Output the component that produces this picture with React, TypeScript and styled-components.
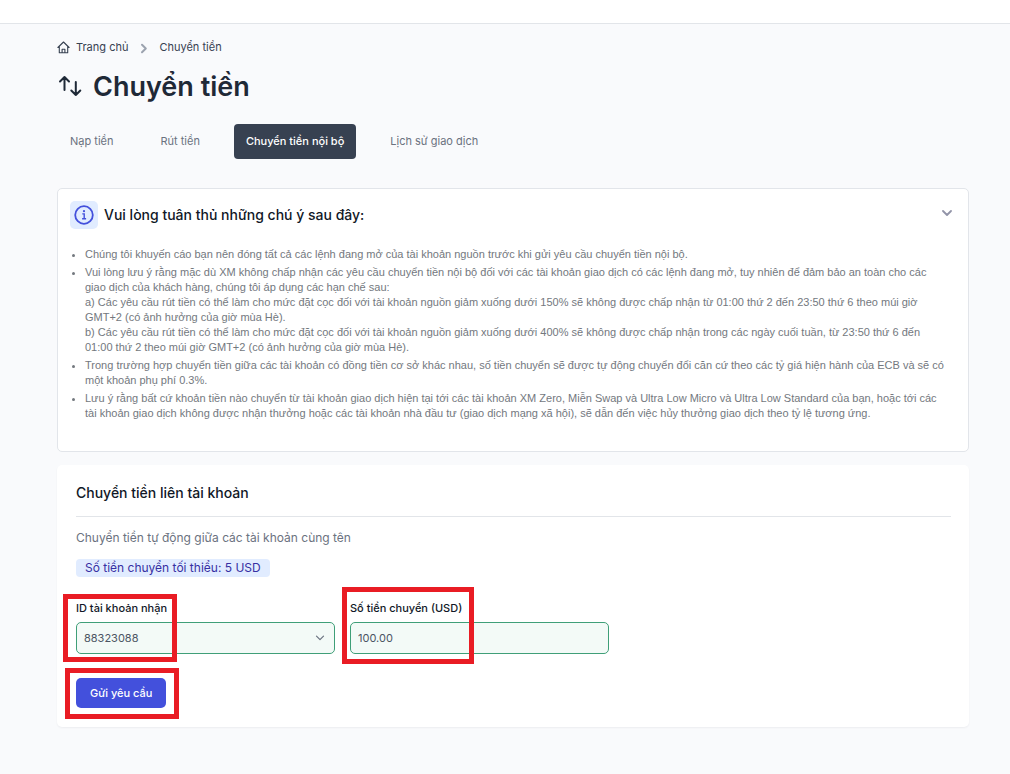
import React, { useState } from "react";
import styled, { createGlobalStyle } from "styled-components";

const GlobalStyle = createGlobalStyle`
  *, *::before, *::after { box-sizing: border-box; }
  body {
    margin: 0;
    background: #f9fafc;
    color: #1f2937;
    font-family: Inter, "Liberation Sans", sans-serif;
    font-size: 11px;
    line-height: 15px;
  }
  h1, h2, p, ul, ol { margin: 0; padding: 0; }
  button, input, select { font-family: inherit; }
`;

const TopBar = styled.header`
  height: 24px;
  background: #ffffff;
  border-bottom: 1px solid #e2e5e9;
`;

const Page = styled.main`
  padding: 16px 41px 47px 57px;
`;

const Breadcrumb = styled.ol`
  display: flex;
  align-items: center;
  list-style: none;
`;

const Crumb = styled.li`
  display: flex;
  align-items: center;
`;

const CrumbLink = styled.a`
  display: flex;
  align-items: center;
  gap: 6px;
  color: #374151;
  text-decoration: none;
`;

const CrumbSeparator = styled.svg`
  margin: 1px 9px 0;
`;

const Title = styled.h1`
  display: flex;
  align-items: center;
  gap: 9px;
  margin-top: 14px;
  font-size: 27px;
  line-height: 36px;
  font-weight: 600;
  color: #1f2937;
`;

const Tabs = styled.nav`
  display: flex;
  align-items: center;
  gap: 21px;
  margin-top: 19px;
`;

const Tab = styled.a<{ $active?: boolean }>`
  display: block;
  padding: ${({ $active }) => ($active ? "10px 12px" : "10px 13px")};
  border-radius: 4px;
  text-decoration: none;
  font-weight: ${({ $active }) => ($active ? 500 : 400)};
  color: ${({ $active }) => ($active ? "#ffffff" : "#6b7280")};
  background: ${({ $active }) => ($active ? "#374151" : "transparent")};
`;

const NoticeCard = styled.section`
  margin-top: 29px;
  padding: 12px 16px 30px 12px;
  background: #ffffff;
  border: 1px solid #e2e5ea;
  border-radius: 5px;
`;

const NoticeToggle = styled.button`
  display: flex;
  align-items: center;
  gap: 6px;
  width: 100%;
  padding: 0;
  border: 0;
  background: none;
  color: #111827;
  font-size: 14px;
  line-height: 20px;
  font-weight: 500;
  text-align: left;
  cursor: pointer;
`;

const NoticeBadge = styled.span`
  display: flex;
  align-items: center;
  justify-content: center;
  width: 28px;
  height: 28px;
  border-radius: 5px;
  background: #e1ecff;
`;

const ToggleText = styled.span`
  flex: 1;
`;

const NoticeList = styled.ul`
  display: flex;
  flex-direction: column;
  gap: 3px;
  margin-top: 18px;
  padding: 0 5px 0 15px;
  color: #73787e;
  font-family: "Liberation Sans", Arial, sans-serif;
`;

const FormCard = styled.form`
  margin-top: 13px;
  padding: 18px 18px 19px 19px;
  background: #ffffff;
  border-radius: 5px;
  box-shadow: 0 1px 2px rgba(31, 41, 55, 0.06);
`;

const FormTitle = styled.h2`
  padding-bottom: 13px;
  border-bottom: 1px solid #e2e5e9;
  font-size: 14px;
  line-height: 20px;
  font-weight: 500;
  color: #111827;
`;

const FormHint = styled.p`
  margin-top: 12px;
  font-size: 12px;
  line-height: 18px;
  color: #6b7280;
`;

const MinimumTag = styled.p`
  width: fit-content;
  margin-top: 12px;
  padding: 0 9px;
  border-radius: 4px;
  background: #e1ecff;
  color: #3730a3;
  font-size: 12px;
  line-height: 18px;
`;

const Fields = styled.div`
  display: flex;
  gap: 15px;
  margin-top: 24px;
`;

const Field = styled.div`
  position: relative;
  flex: 0 1 259px;
`;

const FieldLabel = styled.label`
  display: block;
  margin-bottom: 6px;
  color: #111827;
  font-weight: 500;
`;

const controlStyle = `
  display: block;
  width: 100%;
  height: 32px;
  padding: 0 7px;
  border: 1px solid #3f9f78;
  border-radius: 5px;
  background: #f3faf7;
  color: #4b5563;
  font-size: 11px;
  appearance: none;
`;

const AccountSelect = styled.select`
  ${controlStyle}
`;

const AmountInput = styled.input`
  ${controlStyle}
`;

const SelectChevron = styled.svg`
  position: absolute;
  right: 10px;
  bottom: 11px;
  pointer-events: none;
`;

const Actions = styled.div`
  position: relative;
  width: fit-content;
  margin-top: 24px;
`;

const SubmitButton = styled.button`
  display: block;
  height: 30px;
  padding: 0 14px;
  border: 0;
  border-radius: 5px;
  background: #4350dc;
  color: #ffffff;
  font-size: 11px;
  font-weight: 500;
  cursor: pointer;
`;

const Highlight = styled.span<{ $top: number; $left: number; $width: number; $height: number }>`
  position: absolute;
  top: ${({ $top }) => $top}px;
  left: ${({ $left }) => $left}px;
  width: ${({ $width }) => $width}px;
  height: ${({ $height }) => $height}px;
  border: 5px solid #e91c24;
  pointer-events: none;
`;

const HomeIcon = () => (
  <svg width="13" height="13" viewBox="0 0 13 13" fill="none" stroke="#374151" strokeWidth="1.1" strokeLinecap="round" strokeLinejoin="round" aria-hidden="true">
    <path d="M.9 6.5 6.5 1l5.6 5.500M2.300 5.400v6.400h8.400V5.400M5.100 11.800V8.300h2.800v3.500" />
  </svg>
);

const TransferIcon = () => (
  <svg width="27" height="24" viewBox="0 0 27 24" fill="none" stroke="#1f2937" strokeWidth="2" strokeLinecap="round" strokeLinejoin="round" aria-hidden="true">
    <path d="M7.500 15V2M3 6.500l4.500-4.500L12 6.500M18.800 7v13M14.300 15.500l4.500 4.500 4.500-4.500" />
  </svg>
);

const InfoIcon = () => (
  <svg width="20" height="20" viewBox="0 0 20 20" fill="none" stroke="#4350dc" strokeWidth="1.800" aria-hidden="true">
    <circle cx="10" cy="10" r="8.800" />
    <path d="M8.300 8.900h1.900v4.700M8.100 13.700h4" strokeWidth="1.400" />
    <circle cx="10" cy="6.200" r="1.100" fill="#4350dc" stroke="none" />
  </svg>
);

const notices: React.ReactNode[] = [
  "Chúng tôi khuyến cáo bạn nên đóng tất cả các lệnh đang mở của tài khoản nguồn trước khi gửi yêu cầu chuyển tiền nội bộ.",
  <>
    Vui lòng lưu ý rằng mặc dù XM không chấp nhận các yêu cầu chuyển tiền nội bộ đối với các tài khoản giao dịch có các lệnh đang mở, tuy nhiên để đảm bảo an toàn cho các giao dịch của khách hàng, chúng tôi áp dụng các hạn chế sau:
    <br />
    a) Các yêu cầu rút tiền có thể làm cho mức đặt cọc đối với tài khoản nguồn giảm xuống dưới 150% sẽ không được chấp nhận từ 01:00 thứ 2 đến 23:50 thứ 6 theo múi giờ GMT+2 (có ảnh hưởng của giờ mùa Hè).
    <br />
    b) Các yêu cầu rút tiền có thể làm cho mức đặt cọc đối với tài khoản nguồn giảm xuống dưới 400% sẽ không được chấp nhận trong các ngày cuối tuần, từ 23:50 thứ 6 đến 01:00 thứ 2 theo múi giờ GMT+2 (có ảnh hưởng của giờ mùa Hè).
  </>,
  "Trong trường hợp chuyển tiền giữa các tài khoản có đồng tiền cơ sở khác nhau, số tiền chuyển sẽ được tự động chuyển đổi căn cứ theo các tỷ giá hiện hành của ECB và sẽ có một khoản phụ phí 0.3%.",
  "Lưu ý rằng bất cứ khoản tiền nào chuyển từ tài khoản giao dịch hiện tại tới các tài khoản XM Zero, Miễn Swap và Ultra Low Micro và Ultra Low Standard của bạn, hoặc tới các tài khoản giao dịch không được nhận thưởng hoặc các tài khoản nhà đầu tư (giao dịch mạng xã hội), sẽ dẫn đến việc hủy thưởng giao dịch theo tỷ lệ tương ứng.",
];

export default function App() {
  const [open, setOpen] = useState(true);

  return (
    <>
      <GlobalStyle />
      <TopBar />
      <Page>
        <Breadcrumb>
          <Crumb>
            <CrumbLink href="#home">
              <HomeIcon />
              Trang chủ
            </CrumbLink>
          </Crumb>
          <Crumb>
            <CrumbSeparator width="13" height="13" viewBox="0 0 13 13" fill="none" stroke="#9ca3af" strokeWidth="2" strokeLinecap="round" strokeLinejoin="round" aria-hidden="true">
              <path d="m5 2.800 3.800 3.700L5 10.200" />
            </CrumbSeparator>
            <CrumbLink href="#transfer">Chuyển tiền</CrumbLink>
          </Crumb>
        </Breadcrumb>

        <Title>
          <TransferIcon />
          Chuyển tiền
        </Title>

        <Tabs>
          <Tab href="#deposit">Nạp tiền</Tab>
          <Tab href="#withdraw">Rút tiền</Tab>
          <Tab href="#internal" $active aria-current="page">Chuyển tiền nội bộ</Tab>
          <Tab href="#history">Lịch sử giao dịch</Tab>
        </Tabs>

        <NoticeCard>
          <NoticeToggle type="button" aria-expanded={open} onClick={() => setOpen(!open)}>
            <NoticeBadge>
              <InfoIcon />
            </NoticeBadge>
            <ToggleText>Vui lòng tuân thủ những chú ý sau đây:</ToggleText>
            <svg width="10" height="10" viewBox="0 0 10 10" fill="none" stroke="#9294a8" strokeWidth="1.800" strokeLinecap="round" strokeLinejoin="round" aria-hidden="true">
              <path d="m1 1 4 4 4-4" />
            </svg>
          </NoticeToggle>
          {open && (
            <NoticeList>
              {notices.map((notice, index) => (
                <li key={index}>{notice}</li>
              ))}
            </NoticeList>
          )}
        </NoticeCard>

        <FormCard onSubmit={(event) => event.preventDefault()}>
          <FormTitle>Chuyển tiền liên tài khoản</FormTitle>
          <FormHint>Chuyển tiền tự động giữa các tài khoản cùng tên</FormHint>
          <MinimumTag>Số tiền chuyển tối thiểu: 5 USD</MinimumTag>
          <Fields>
            <Field>
              <FieldLabel htmlFor="account">ID tài khoản nhận</FieldLabel>
              <AccountSelect id="account" defaultValue="88323088">
                <option value="88323088">88323088</option>
              </AccountSelect>
              <SelectChevron width="10" height="10" viewBox="0 0 10 10" fill="none" stroke="#6b7280" strokeWidth="1.200" strokeLinecap="round" strokeLinejoin="round" aria-hidden="true">
                <path d="m1.500 3.200 3.500 3.500 3.500-3.500" />
              </SelectChevron>
              <Highlight $top={-7} $left={-13} $width={114} $height={68} />
            </Field>
            <Field>
              <FieldLabel htmlFor="amount">Số tiền chuyển (USD)</FieldLabel>
              <AmountInput id="amount" type="text" inputMode="decimal" defaultValue="100.00" />
              <Highlight $top={-14} $left={-8} $width={132} $height={77} />
            </Field>
          </Fields>
          <Actions>
            <SubmitButton type="submit">Gửi yêu cầu</SubmitButton>
            <Highlight $top={-10} $left={-11} $width={114} $height={51} />
          </Actions>
        </FormCard>
      </Page>
    </>
  );
}
